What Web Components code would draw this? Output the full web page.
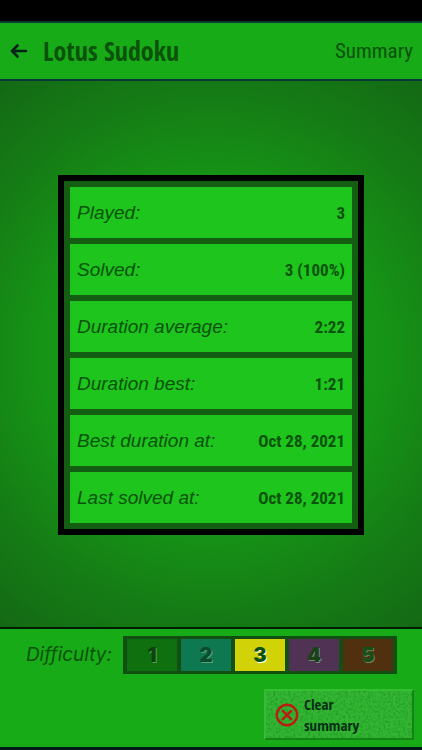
<!DOCTYPE html>
<html lang="en">
<head>
<meta charset="utf-8">
<meta name="viewport" content="width=device-width, initial-scale=1">
<title>Lotus Sudoku - Summary</title>
<style>
  :root {
    --bar: #18ab18;
    --ink: #0b520b;
    --narrow: "Open Sans Condensed", "DejaVu Sans Condensed", sans-serif;
    --number: "Roboto Condensed", "Open Sans Condensed", sans-serif;
    --sans: "Liberation Sans", Arial, sans-serif;
  }

  html,
  body {
    margin: 0;
    min-height: 100%;
    background: #000;
  }
</style>
</head>
<body>
<sudoku-app>
  <app-header slot="header">
    Lotus Sudoku
    <span slot="page">Summary</span>
  </app-header>
  <stat-table></stat-table>
  <difficulty-picker slot="footer" value="3"></difficulty-picker>
  <stone-button slot="footer">Clear summary</stone-button>
</sudoku-app>

<script>
(() => {
  class SudokuApp extends HTMLElement {
    constructor() {
      super();
      this.attachShadow({ mode: "open" }).innerHTML = `
        <style>
          :host {
            display: flex;
            flex-direction: column;
            box-sizing: border-box;
            min-height: 100vh;
            padding: 21px 0 3px;
            background: linear-gradient(#000 50%, #001a1a 50%);
          }

          main {
            flex: 1;
            display: grid;
            align-items: center;
            padding: 2px 58px 0;
            background: radial-gradient(circle farthest-corner, #17a017 0%, #169416 50%, #157c15 75%, #146914 100%);
          }

          footer {
            display: flex;
            flex-direction: column;
            align-items: flex-end;
            gap: 15px;
            padding: 7px 8px 7px 24px;
            border-top: 2px solid #021c02;
            background: var(--bar);
          }
        </style>
        <slot name="header"></slot>
        <main><slot></slot></main>
        <footer><slot name="footer"></slot></footer>
      `;
    }
  }

  class AppHeader extends HTMLElement {
    constructor() {
      super();
      this.attachShadow({ mode: "open" }).innerHTML = `
        <style>
          :host {
            display: block;
            border: solid #083838;
            border-width: 2px 0;
            background: var(--bar);
            color: var(--ink);
            font-family: var(--narrow);
          }

          header {
            display: flex;
            align-items: center;
            gap: 15px;
            height: 56px;
            padding: 0 9px 0 10px;
          }

          button {
            display: flex;
            padding: 0;
            border: 0;
            background: none;
          }

          h1 {
            flex: 1;
            margin: 0;
            font-size: 26px;
            font-weight: 700;
            line-height: 32px;
            white-space: nowrap;
          }

          .page {
            font-family: var(--number);
            font-size: 21px;
            font-weight: 400;
            line-height: 32px;
          }
        </style>
        <header>
          <button type="button" aria-label="Back">
            <svg width="18" height="16" viewBox="0 0 18 16" fill="none" stroke="#06201c" stroke-width="2.6" stroke-linecap="round" stroke-linejoin="round">
              <path d="M16 8H2M7.500 2.500L2 8l5.500 5.500"/>
            </svg>
          </button>
          <h1><slot></slot></h1>
          <span class="page"><slot name="page"></slot></span>
        </header>
      `;
    }
  }

  const STATS = [
    ["Played:", "3"],
    ["Solved:", "3 (100%)"],
    ["Duration average:", "2:22"],
    ["Duration best:", "1:21"],
    ["Best duration at:", "Oct 28, 2021"],
    ["Last solved at:", "Oct 28, 2021"],
  ];

  class StatTable extends HTMLElement {
    constructor() {
      super();
      this.attachShadow({ mode: "open" });
    }

    connectedCallback() {
      const rows = STATS.map(([label, value]) => `<tr><th scope="row">${label}</th><td>${value}</td></tr>`).join("");

      this.shadowRoot.innerHTML = `
        <style>
          :host {
            display: block;
            border: 6px solid #000;
            background: #145e14;
            color: var(--ink);
          }

          table {
            width: 100%;
            border-spacing: 0 6px;
            padding: 0 6px;
          }

          th,
          td {
            height: 51px;
            padding: 0 7px;
            background: #1dc51d;
            white-space: nowrap;
          }

          th {
            font: italic 400 19px/24px var(--sans);
            text-align: left;
          }

          td {
            font: 700 17px/24px var(--number);
            text-align: right;
          }
        </style>
        <table>${rows}</table>
      `;
    }
  }

  const LEVELS = [
    { fill: "#0f700f", ink: "#0b450b" },
    { fill: "#0e7850", ink: "#0b4c30" },
    { fill: "#d2d208", ink: "#0b520b" },
    { fill: "#503254", ink: "#174317" },
    { fill: "#50300f", ink: "#174f1b" },
  ];

  class DifficultyPicker extends HTMLElement {
    constructor() {
      super();
      this.attachShadow({ mode: "open" });
    }

    connectedCallback() {
      const value = Number(this.getAttribute("value"));
      const cells = LEVELS.map((level, i) => `
        <label style="--fill: ${level.fill}; --digit: ${level.ink}">
          <input type="radio" name="level" value="${i + 1}"${i + 1 === value ? " checked" : ""}>
          <span>${i + 1}</span>
        </label>`).join("");

      this.shadowRoot.innerHTML = `
        <style>
          :host {
            display: block;
          }

          fieldset {
            display: flex;
            align-items: center;
            gap: 11px;
            margin: 0 17px 0 0;
            padding: 0;
            border: 0;
            color: var(--ink);
          }

          .title {
            font: italic 400 19px/24px Inter, sans-serif;
          }

          .cells {
            display: flex;
            gap: 4px;
            padding: 3px 4px;
            background: #124f12;
          }

          label {
            position: relative;
            display: grid;
            place-items: center;
            width: 50px;
            height: 32px;
            background: var(--fill);
            color: var(--digit);
            font: 900 20px/24px Inter, sans-serif;
            text-shadow: 1px 1px 0 rgba(160, 200, 150, .55);
          }

          label:has(:checked) {
            text-shadow: 1px 1px 0 #fff;
          }

          input {
            position: absolute;
            inset: 0;
            margin: 0;
            opacity: 0;
          }
        </style>
        <fieldset aria-labelledby="title">
          <span class="title" id="title">Difficulty:</span>
          <div class="cells">${cells}</div>
        </fieldset>
      `;
    }
  }

  class StoneButton extends HTMLElement {
    constructor() {
      super();
      this.attachShadow({ mode: "open" }).innerHTML = `
        <style>
          :host {
            display: block;
          }

          button {
            position: relative;
            display: flex;
            align-items: center;
            gap: 5px;
            box-sizing: border-box;
            width: 150px;
            min-height: 51px;
            padding: 0 48px 0 9px;
            border: 2px solid;
            border-color: #36bd36 #168316 #168316 #36bd36;
            background: #34b634;
            color: #062f16;
            font: 700 15px/21px var(--narrow);
            text-align: left;
          }

          /* grain of the stone, under the caption */
          .grain {
            position: absolute;
            inset: 0;
            width: 100%;
            height: 100%;
            opacity: .45;
          }

          .icon,
          .caption {
            position: relative;
            flex: none;
          }

          .caption {
            width: 64px;
          }
        </style>
        <button type="button">
          <svg class="grain" aria-hidden="true">
            <filter id="grain" x="0" y="0" width="100%" height="100%" color-interpolation-filters="sRGB">
              <feTurbulence type="fractalNoise" baseFrequency=".4" numOctaves="2" seed="4"/>
              <feColorMatrix values="0 0 0 0 .05  0 0 0 0 .5  0 0 0 0 .05  2.400 0 0 0 -.95"/>
            </filter>
            <rect width="100%" height="100%" filter="url(#grain)"/>
          </svg>
          <svg class="icon" width="24" height="24" viewBox="0 0 24 24" fill="none" stroke="#bd1a10" stroke-width="2.4" stroke-linecap="round" aria-hidden="true">
            <circle cx="12" cy="12" r="10.200"/>
            <path d="M7.800 7.800l8.400 8.400M16.200 7.800l-8.400 8.400"/>
          </svg>
          <span class="caption"><slot></slot></span>
        </button>
      `;
    }
  }

  customElements.define("sudoku-app", SudokuApp);
  customElements.define("app-header", AppHeader);
  customElements.define("stat-table", StatTable);
  customElements.define("difficulty-picker", DifficultyPicker);
  customElements.define("stone-button", StoneButton);
})();
</script>
</body>
</html>
